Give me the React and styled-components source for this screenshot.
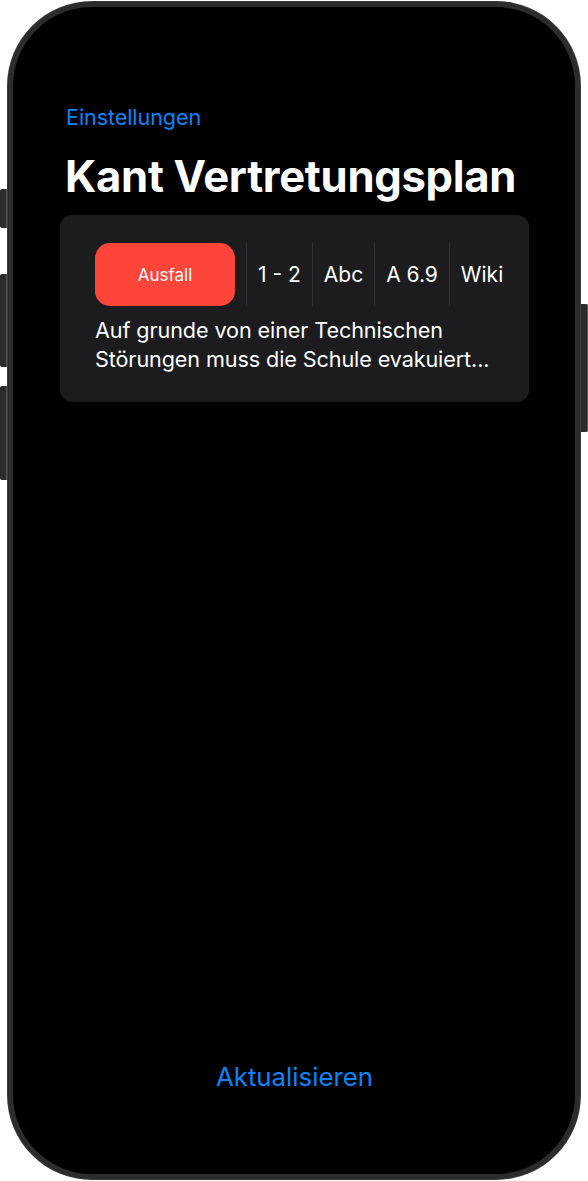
import React from "react";
import styled, { createGlobalStyle } from "styled-components";

const Global = createGlobalStyle`
  html, body { margin: 0; padding: 0; background: #ffffff; }
  body { font-family: Inter, "Noto Sans", "Liberation Sans", sans-serif; -webkit-font-smoothing: antialiased; }
`;

const Stage = styled.div`
  position: relative;
  width: 588px;
  height: 1181px;
  padding: 2px 8px 0 8px;
  box-sizing: border-box;
`;

const SideButton = styled.div`
  position: absolute;
  top: ${(p) => p.$top}px;
  height: ${(p) => p.$h}px;
  width: 7px;
  ${(p) => (p.$right ? "right: 0;" : "left: 0;")}
  background: #2b2b2b;
  border-radius: ${(p) => (p.$right ? "0 2px 2px 0" : "2px 0 0 2px")};
  box-shadow: inset -1px 0 0 #5a5a5a;
`;

const Phone = styled.div`
  width: 572px;
  height: 1177px;
  box-sizing: border-box;
  border: 5px solid #2c2c2c;
  border-radius: 84px;
  background: #000000;
  box-shadow: 0 0 0 1px #3a3a3a;
  display: flex;
  flex-direction: column;
  padding: 0 46px 0 47px;
  overflow: hidden;
`;

const NavLink = styled.div`
  margin-top: 97px;
  padding-left: 6px;
  color: #0a84ff;
  font-size: 21.6px;
  line-height: 26px;
  letter-spacing: -0.1px;
`;

const Title = styled.h1`
  margin: 22px 0 0 0;
  padding-left: 5px;
  color: #ffffff;
  font-size: 43.6px;
  line-height: 50px;
  font-weight: 700;
  letter-spacing: -0.3px;
`;

const Card = styled.div`
  margin-top: 13px;
  background: #1c1c1e;
  border-radius: 12px;
  padding: 28px 20px 28px 35px;
  display: flex;
  flex-direction: column;
  gap: 10px;
`;

const Row = styled.div`
  display: flex;
  align-items: stretch;
  height: 63px;
`;

const Pill = styled.div`
  width: 140px;
  background: #ff453a;
  border-radius: 15px;
  color: #ffffff;
  font-size: 17px;
  display: flex;
  align-items: center;
  justify-content: center;
  margin-right: 11px;
`;

const Cell = styled.div`
  display: flex;
  align-items: center;
  padding: 0 ${(p) => (p.$last ? 0 : 11)}px 0 11px;
  border-left: 1px solid #2e2e30;
  color: #ffffff;
  font-size: 21px;
  white-space: nowrap;
`;

const Description = styled.p`
  margin: 0;
  color: #ffffff;
  font-size: 21.6px;
  line-height: 29px;
  letter-spacing: -0.1px;
  white-space: nowrap;
`;

const Footer = styled.div`
  margin-top: auto;
  margin-bottom: 82px;
  text-align: center;
  color: #0a84ff;
  font-size: 25.8px;
  line-height: 30px;
`;

export default function App() {
  return (
    <>
      <Global />
      <Stage>
        <SideButton $top={189} $h={39} />
        <SideButton $top={274} $h={93} />
        <SideButton $top={386} $h={94} />
        <SideButton $right $top={304} $h={128} />
        <Phone>
          <NavLink>Einstellungen</NavLink>
          <Title>Kant Vertretungsplan</Title>
          <Card>
            <Row>
              <Pill>Ausfall</Pill>
              <Cell>1 - 2</Cell>
              <Cell>Abc</Cell>
              <Cell>A 6.9</Cell>
              <Cell $last>Wiki</Cell>
            </Row>
            <Description>
              Auf grunde von einer Technischen
              <br />
              Störungen muss die Schule evakuiert...
            </Description>
          </Card>
          <Footer>Aktualisieren</Footer>
        </Phone>
      </Stage>
    </>
  );
}
